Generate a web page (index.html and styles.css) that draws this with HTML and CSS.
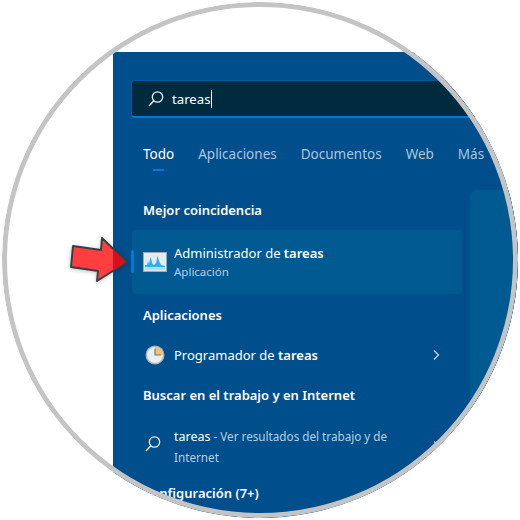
FILE: index.html
```html
<!DOCTYPE html>
<html lang="es">
<head>
    <meta charset="UTF-8">
    <title>Búsqueda de tareas</title>
    <link rel="stylesheet" href="styles.css">
</head>
<body>

    <div class="lens">
        <div class="panel">

            <!-- caja de búsqueda -->
            <div class="search-box">
                <svg class="search-icon" width="18" height="18" viewBox="0 0 18 18">
                    <circle cx="10.5" cy="7" r="5.2"/>
                    <path d="M6.8 10.8 L2 16"/>
                </svg>
                <span class="search-text">tareas</span><span class="caret"></span>
            </div>

            <div class="tabs">
                <span class="tab tab-active">Todo</span>
                <span class="tab">Aplicaciones</span>
                <span class="tab">Documentos</span>
                <span class="tab">Web</span>
                <span class="tab">Más</span>
            </div>

            <div class="content">
                <div class="results">
                    <h3 class="best-title">Mejor coincidencia</h3>
                    <div class="best-card">
                        <span class="best-bar"></span>
                        <svg class="app-icon" width="24" height="20" viewBox="0 0 24 20">
                            <rect x="0.5" y="0.5" width="23" height="19" fill="#e4ebef" stroke="#9ea9b1"/>
                            <path d="M2 17 L2 13 L4 13 L5 9 L6 12 L7.5 5 L9.5 12 L11 13 L13 11 L14.5 4 L16.5 10 L18 13 L22 14 L22 17 Z" fill="#2fb2ec"/>
                            <path d="M2 18 L2 15 L22 15 L22 18 Z" fill="#a5e3f9"/>
                        </svg>
                        <div class="best-text">
                            <div class="item-name">Administrador de <b>tareas</b></div>
                            <div class="item-sub">Aplicación</div>
                        </div>
                    </div>

                    <h3 class="apps-title">Aplicaciones</h3>
                    <div class="app-row">
                        <svg class="clock-icon" width="20" height="20" viewBox="0 0 20 20">
                            <circle cx="10" cy="10" r="9.5" fill="#aab2b8"/>
                            <circle cx="10" cy="10" r="8" fill="#e9eef1"/>
                            <path d="M10 2 A8 8 0 0 1 18 10 L10 10 Z" fill="#eec36f"/>
                            <path d="M10 3.5 L10 10 L16 10" fill="none" stroke="#77797a" stroke-width="1.2"/>
                        </svg>
                        <div class="item-name">Programador de <b>tareas</b></div>
                        <svg class="chevron" width="8" height="12" viewBox="0 0 8 12"><path d="M2 1.5 L6.5 6 L2 10.5"/></svg>
                    </div>

                    <h3 class="web-title">Buscar en el trabajo y en Internet</h3>
                    <div class="web-row">
                        <svg class="search-icon web-icon" width="18" height="18" viewBox="0 0 18 18">
                            <circle cx="10.5" cy="7" r="5.2"/>
                            <path d="M6.8 10.8 L2 16"/>
                        </svg>
                        <div class="web-text">
                            <div><span class="web-query">tareas</span> - Ver resultados del trabajo y de</div>
                            <div>Internet</div>
                        </div>
                        <svg class="chevron web-chevron" width="8" height="12" viewBox="0 0 8 12"><path d="M2 1.5 L6.5 6 L2 10.5"/></svg>
                    </div>

                    <h3 class="config-title">Configuración (7+)</h3>
                </div>
                <div class="preview"></div>
            </div>
        </div>

        <div class="ring"></div>
    </div>

    <!-- flecha roja encima de la captura -->
    <svg class="arrow" width="60" height="46" viewBox="0 0 60 46">
        <path d="M3 9 L31 13 L32 1 L57 25 L27 44 L28 34 L1 30 Z" fill="#ff3f3f" stroke="#3a3f44" stroke-width="2" stroke-linejoin="round"/>
        <path d="M43 12.5 L56 25 L43 33.5 Z" fill="#d5101f"/>
    </svg>

</body>
</html>
```

FILE: styles.css
```css
body {
    margin: 0;
    background-color: #fff;
    font-family: "Noto Sans", "Open Sans", sans-serif;
    color: #fff;
}

.lens {
    position: relative;
    width: 516px;
    height: 516px;
    margin: 2px;
    border-radius: 50%;
    overflow: hidden;
    background-color: #fff;
}

/* el aro gris va encima del panel */
.ring {
    position: absolute;
    inset: 0;
    border: 5px solid #c4c4c4;
    border-radius: 50%;
}

.panel {
    margin: 50px 0 0 111px;
    width: 420px;
    height: 480px;
    padding: 28px 0 0 18px;
    box-sizing: border-box;
    background-color: #004e8c;
}

.search-box {
    display: flex;
    align-items: center;
    width: 400px;
    height: 38px;
    padding-left: 15px;
    box-sizing: border-box;
    background-color: #002b3f;
    border: 1px solid #005a9e;
    border-bottom: 2px solid #0078d4;
    border-radius: 4px;
}

.search-icon {
    fill: none;
    stroke: #e8eef2;
    stroke-width: 1.3;
}

.search-text {
    margin-left: 7px;
    font-size: 13.2px;
}

.caret {
    width: 1px;
    height: 18px;
    background-color: #fff;
}

.tabs {
    display: flex;
    gap: 24px;
    height: 31px;
    margin-top: 24px;
    padding-left: 12px;
    font-size: 13.5px;
    color: #a9c7de;
    white-space: nowrap;
}

.tab {
    line-height: 24px;
}

.tab-active {
    color: #fff;
    background: linear-gradient(#0078d4, #0078d4) no-repeat 10px 27px / 11px 2px;
}

.content {
    display: flex;
    gap: 8px;
    margin-top: 17px;
}

.results {
    width: 331px;
    flex-shrink: 0;
}

.preview {
    width: 120px;
    height: 330px;
    background-color: #005a92;
    border-radius: 6px;
}

h3 {
    margin: 0 0 0 12px;
    font-size: 13px;
    font-weight: 600;
    line-height: 18px;
}

.best-title {
    padding-top: 11px;
}

.best-card {
    position: relative;
    display: flex;
    align-items: center;
    width: 330px;
    height: 64px;
    margin: 11px 0 0 1px;
    padding-left: 11px;
    box-sizing: border-box;
    background-color: #005a92;
    border-radius: 4px;
}

.best-bar {
    position: absolute;
    left: -1px;
    top: 20px;
    width: 3px;
    height: 23px;
    background-color: #0078d4;
    border-radius: 2px;
}

.app-icon {
    flex-shrink: 0;
}

.best-text {
    margin-left: 7px;
}

.item-name {
    font-size: 13px;
    line-height: 20px;
}

.item-name b {
    font-weight: 600;
}

.item-sub {
    font-size: 11.5px;
    line-height: 18px;
    color: #b5cfe2;
}

.apps-title {
    margin-top: 12px;
}

.app-row {
    display: flex;
    align-items: center;
    height: 40px;
    margin-top: 11px;
    padding-left: 14px;
}

.clock-icon {
    flex-shrink: 0;
    margin-right: 9px;
}

.chevron {
    fill: none;
    stroke: #b5cfe2;
    stroke-width: 1.4;
    margin-left: auto;
    margin-right: 22px;
}

.web-title {
    margin-top: 11px;
}

.web-row {
    display: flex;
    align-items: center;
    height: 50px;
    margin-top: 17px;
    padding-left: 13px;
}

.web-icon {
    flex-shrink: 0;
    margin-top: -4px;
}

.web-text {
    width: 232px;
    margin-left: 12px;
    font-size: 11.7px;
    line-height: 20px;
    color: #b5cfe2;
    white-space: nowrap;
}

.web-query {
    font-size: 12.5px;
    color: #fff;
}

.web-chevron {
    margin-right: 22px;
}

.config-title {
    margin-top: 13px;
}

.arrow {
    position: absolute;
    left: 70px;
    top: 237px;
    filter: drop-shadow(0 1px 2px rgba(0, 0, 0, 0.25));
}
```
